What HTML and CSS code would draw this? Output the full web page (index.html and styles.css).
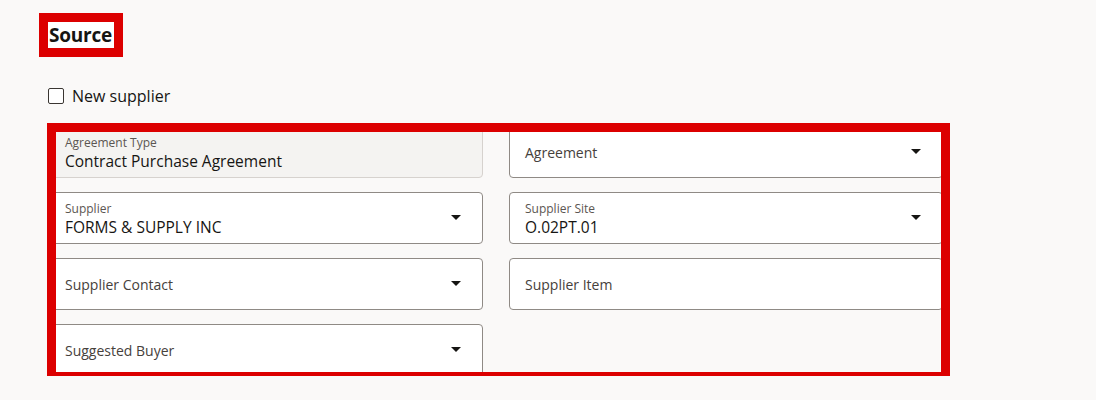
FILE: index.html
```html
<!DOCTYPE html>
<html>
<head>
    <title>Source</title>
    <link rel="stylesheet" href="styles.css">
</head>
<body>
    <div class="page">
        <h2 class="section-title">Source</h2>

        <label class="check">
            <span class="check-box"></span>
            New supplier
        </label>

        <div class="form-area">
            <div class="form-grid">
                <div class="field readonly">
                    <span class="field-label">Agreement Type</span>
                    <span class="field-value">Contract Purchase Agreement</span>
                </div>
                <div class="field select">
                    <span class="field-hint">Agreement</span>
                    <span class="caret"></span>
                </div>

                <div class="field select">
                    <span class="field-label">Supplier</span>
                    <span class="field-value">FORMS &amp; SUPPLY INC</span>
                    <span class="caret"></span>
                </div>
                <div class="field select">
                    <span class="field-label">Supplier Site</span>
                    <span class="field-value">O.02PT.01</span>
                    <span class="caret"></span>
                </div>

                <div class="field select">
                    <span class="field-hint">Supplier Contact</span>
                    <span class="caret"></span>
                </div>
                <div class="field">
                    <span class="field-hint">Supplier Item</span>
                </div>

                <div class="field select">
                    <span class="field-hint">Suggested Buyer</span>
                    <span class="caret"></span>
                </div>
            </div>
            <!-- annotation frame drawn over the fields -->
            <div class="highlight"></div>
        </div>
    </div>
</body>
</html>
```

FILE: styles.css
```css
body {
    margin: 0;
    background-color: #faf9f8;
    font-family: "Open Sans", "Noto Sans", sans-serif;
    color: #161513;
}
.page {
    padding: 13px 0 0 39px;
}
.section-title {
    display: inline-block;
    margin: 0;
    padding: 0 2px 0 1px;
    font-size: 19px;
    line-height: 26px;
    font-weight: 700;
    letter-spacing: -0.2px;
    background-color: #ffffff;
    border: 9px solid #dc0000;
}
.check {
    display: flex;
    align-items: center;
    gap: 8px;
    margin: 28px 0 0 9px;
    font-size: 16px;
    line-height: 22px;
}
.check-box {
    width: 14px;
    height: 14px;
    border: 1px solid #3a3632;
    border-radius: 2px;
    background-color: #ffffff;
}
.form-area {
    position: relative;
    margin: 19px 0 0 10px;
    width: 894px;
}
.form-grid {
    display: grid;
    grid-template-columns: 434px 434px;
    grid-auto-rows: 52px;
    column-gap: 26px;
    row-gap: 14px;
}
.field {
    position: relative;
    box-sizing: border-box;
    display: flex;
    flex-direction: column;
    justify-content: center;
    padding: 1px 40px 0 15px;
    background-color: #ffffff;
    border: 1px solid #8f8a85;
    border-radius: 4px;
}
.field.readonly {
    background-color: #f4f3f1;
    border-color: #d6d2ce;
}
.field-label {
    font-size: 12px;
    line-height: 17px;
    color: #5b5652;
}
.field-value {
    font-size: 15.5px;
    line-height: 21px;
}
.field-hint {
    font-size: 14px;
    line-height: 20px;
    color: #46413c;
}
.caret {
    position: absolute;
    right: 21px;
    top: 50%;
    margin-top: -3px;
    width: 0;
    height: 0;
    border-left: 5px solid transparent;
    border-right: 5px solid transparent;
    border-top: 5px solid #161513;
}
.highlight {
    position: absolute;
    left: -2px;
    top: -3px;
    width: 903px;
    height: 258px;
    box-sizing: border-box;
    border: 9px solid #dc0000;
    pointer-events: none;
}
```
